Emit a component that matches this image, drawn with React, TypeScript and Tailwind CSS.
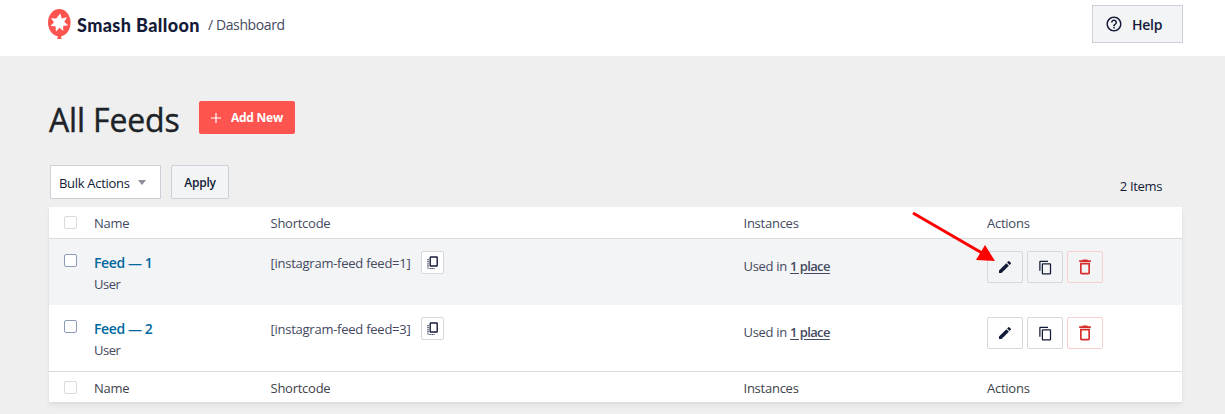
import { FC, ReactNode } from "react"
import {
  MdContentCopy,
  MdDeleteOutline,
  MdEdit,
  MdHelpOutline,
} from "react-icons/md"

type Feed = {
  name: string
  type: string
  shortcode: string
}

const feeds: Feed[] = [
  { name: "Feed — 1", type: "User", shortcode: "[instagram-feed feed=1]" },
  { name: "Feed — 2", type: "User", shortcode: "[instagram-feed feed=3]" },
]

const columns = "grid grid-cols-[45px_176.5px_473px_243.5px_1fr]"

const Logo: FC = () => (
  <div className="flex items-center">
    <svg width="23" height="31" viewBox="0 0 23 31" className="shrink-0">
      <path
        d="M11.3 0C5 0 0 5.9 0 13.6c0 7.2 4.3 13 10 13.9l-.9 2.6h4.7l-.9-2.6c5.6-1 9.7-6.8 9.700-13.900C22.600 5.900 17.600 0 11.300 0Z"
        fill="#fe544f"
      />
      <path
        d="M12.300 4.500 13.800 9.400 18.900 8.300 16.300 12.900 20.200 16.300 15.100 16.900 15.300 22.100 11.500 18.700 7.900 22.700 7.500 17.300 2.500 17.100 6 13.300 2.900 9.200 8.200 9.600Z"
        fill="#fff"
      />
    </svg>
    <span className="ml-[6px] w-[123px] whitespace-nowrap font-['Lato',sans-serif] text-[18px] font-black leading-6 tracking-[0.4px] text-[#141b38]">
      Smash Balloon
    </span>
  </div>
)

const CopyIcon: FC = () => (
  <svg width="12" height="14" viewBox="0 0 12 14" fill="none" stroke="currentColor">
    <rect x="3.2" y="1" width="7" height="9" rx="0.5" strokeWidth="1.4" />
    <path d="M1 3v10" strokeWidth="1.2" strokeDasharray="1.2 0.9" />
    <path d="M2.500 12.500h5" strokeWidth="1.2" strokeDasharray="1.2 0.9" />
  </svg>
)

const Checkbox: FC<{ muted?: boolean }> = ({ muted = false }) => (
  <span
    className={`block size-[13px] rounded-[2px] border bg-white ${
      muted ? "border-[#d8dadd]" : "border-[#8c9bb8]"
    }`}
  />
)

const ColumnLabels: FC<{ className: string }> = ({ className }) => (
  <div className={`${columns} items-center ${className}`}>
    <div className="pl-[15px]">
      <Checkbox muted />
    </div>
    <span className="pt-0.5">Name</span>
    <span className="pt-0.5">Shortcode</span>
    <span className="pt-0.5">Instances</span>
    <span className="pt-0.5">Actions</span>
  </div>
)

const ActionButton: FC<{
  label: string
  danger?: boolean
  children: ReactNode
}> = ({ label, danger = false, children }) => (
  <button
    type="button"
    aria-label={label}
    className={`flex h-8 w-9 items-center justify-center rounded-[2px] border ${
      danger ? "border-[#facfd0] text-[#d72c2c]" : "border-[#d5d7db] text-[#141b38]"
    }`}
  >
    {children}
  </button>
)

const FeedRow: FC<{ feed: Feed; shaded: boolean }> = ({ feed, shaded }) => (
  <div
    className={`${columns} h-[66px] items-start ${
      shaded ? "bg-[#f3f4f5]" : "bg-white"
    }`}
  >
    <div className="pl-[15px] pt-[15px]">
      <Checkbox />
    </div>
    <div className="pt-[14px]">
      <a className="block text-[14px] font-semibold leading-5 tracking-[-0.4px] text-[#0068a0]">
        {feed.name}
      </a>
      <span className="mt-px block leading-5 tracking-[-0.5px]">{feed.type}</span>
    </div>
    <div className="flex items-start pt-3">
      <span className="w-[150.5px] whitespace-nowrap pt-[2px] leading-5">
        {feed.shortcode}
      </span>
      <button
        type="button"
        aria-label="Copy shortcode"
        className="flex size-[23px] items-center justify-center rounded-[2px] border border-[#d5d7db] bg-white text-[#141b38]"
      >
        <CopyIcon />
      </button>
    </div>
    <div className="pt-[17px] leading-5 tracking-[-0.3px]">
      Used in{" "}
      <a className="font-semibold tracking-[-0.6px] underline underline-offset-2">
        1 place
      </a>
    </div>
    <div className="flex gap-1 pt-3">
      <ActionButton label="Edit">
        <MdEdit size={16} />
      </ActionButton>
      <ActionButton label="Duplicate">
        <MdContentCopy size={15} />
      </ActionButton>
      <ActionButton label="Delete" danger>
        <MdDeleteOutline size={20} />
      </ActionButton>
    </div>
  </div>
)

const App: FC = () => (
  <div className="relative h-[414px] w-[1225px] overflow-hidden bg-[#efefef] font-['Open_Sans',sans-serif] text-[13px] tracking-[-0.25px] text-[#434960]">
    <header className="flex h-14 items-start justify-between bg-white pl-12 pr-[42px]">
      <div className="flex items-center pt-[9px]">
        <Logo />
        <span className="ml-2 text-[14px] leading-5 tracking-[-0.4px] text-[#434960]">
          / Dashboard
        </span>
      </div>
      <button
        type="button"
        className="mt-[5px] flex h-[38px] w-[91px] items-center border border-[#ced0d9] bg-[#f3f4f5] pl-3 text-[14px] font-semibold text-[#141b38]"
      >
        <MdHelpOutline size={18} />
        <span className="ml-[9px]">Help</span>
      </button>
    </header>

    <main className="pl-[49px] pr-[43px] pt-[45px]">
      <div className="flex h-[38px] items-start">
        <h1 className="w-[150px] whitespace-nowrap text-[32px] font-medium leading-[38px] tracking-[-0.15px] text-[#1d2327] [-webkit-text-stroke:0.4px_#1d2327]">
          All Feeds
        </h1>
        <button
          type="button"
          className="flex h-[33px] w-24 items-center rounded-[2px] bg-[#fe544f] pl-3 text-[12px] font-bold text-white"
        >
          <svg width="10" height="10" viewBox="0 0 10 10">
            <path d="M5 0v10M0 5h10" stroke="currentColor" strokeWidth="1.2" />
          </svg>
          <span className="ml-[10px]">Add New</span>
        </button>
      </div>

      <div className="mt-[26px] flex h-[42px] items-start pl-px text-[#141b38]">
        <div className="flex h-[34px] w-[111px] items-center border border-[#ced0d9] bg-white pl-2">
          <span className="w-[79px] pt-[3px] tracking-[-0.3px]">
            Bulk Actions
          </span>
          <svg width="8" height="5" viewBox="0 0 8 5">
            <path d="M0 0h8L4 5Z" fill="#8c8f9a" />
          </svg>
        </div>
        <button
          type="button"
          className="ml-[10px] h-[34px] w-[58px] rounded-[2px] border border-[#ced0d9] bg-[#f3f4f5] pt-0.5 text-[12px] font-semibold"
        >
          Apply
        </button>
        <span className="ml-auto mr-5 mt-[11px] leading-5 tracking-[-0.35px]">
          2 Items
        </span>
      </div>

      <section className="bg-white shadow-[0_4px_5px_rgba(0,0,0,0.05),0_1px_2px_rgba(0,0,0,0.05)]">
        <ColumnLabels className="h-8 border-b border-[#d8dade]" />
        {feeds.map((feed, index) => (
          <FeedRow key={feed.name} feed={feed} shaded={index % 2 === 0} />
        ))}
        <ColumnLabels className="h-[31px] border-t border-[#d8dade] pt-px text-[#40434a]" />
      </section>
    </main>

    <svg
      width="84"
      height="51"
      viewBox="0 0 84 51"
      className="pointer-events-none absolute left-[912px] top-[211px]"
    >
      <path d="M1 2 70 42" stroke="#fe0000" strokeWidth="3" />
      <path d="M73 34 83 50 64 49Z" fill="#fe0000" />
    </svg>
  </div>
)

export default App
